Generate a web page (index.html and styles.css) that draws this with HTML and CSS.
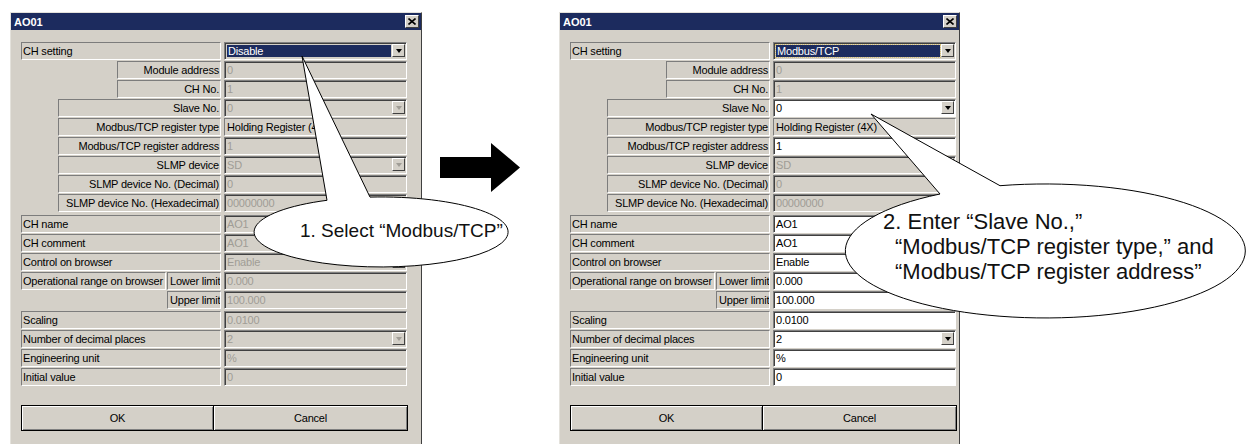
FILE: index.html
```html
<!DOCTYPE html>
<html lang="en">
<head>
  <meta charset="UTF-8" />
  <title>AO01 - CH setting</title>
  <link rel="stylesheet" href="styles.css">
</head>
<body>
  <div class="page">

    <!-- before: CH setting = Disable -->
    <div class="dlg dlg-first">
      <div class="titlebar">
        <span>AO01</span>
        <span class="close"><svg width="8" height="7" viewBox="0 0 8 7"><path d="M0.5 0.5 L7.5 6.5 M7.5 0.5 L0.5 6.5" stroke="#000" stroke-width="1.6"/></svg></span>
      </div>
      <div class="dlg-body">
        <div class="row"><div class="lbl">CH setting</div><div class="val hl"><span class="txt">Disable</span><span class="drop"></span></div></div>
        <div class="row"><div class="lbl r sub2">Module address</div><div class="val off"><span class="txt">0</span></div></div>
        <div class="row"><div class="lbl r sub2">CH No.</div><div class="val off"><span class="txt">1</span></div></div>
        <div class="row"><div class="lbl r sub1">Slave No.</div><div class="val off"><span class="txt">0</span><span class="drop dim"></span></div></div>
        <div class="row"><div class="lbl r sub1">Modbus/TCP register type</div><div class="val stat"><span class="txt">Holding Register (4X)</span></div></div>
        <div class="row"><div class="lbl r sub1">Modbus/TCP register address</div><div class="val off"><span class="txt">1</span></div></div>
        <div class="row"><div class="lbl r sub1">SLMP device</div><div class="val off"><span class="txt">SD</span><span class="drop dim"></span></div></div>
        <div class="row"><div class="lbl r sub1">SLMP device No. (Decimal)</div><div class="val off"><span class="txt">0</span></div></div>
        <div class="row"><div class="lbl r sub1">SLMP device No. (Hexadecimal)</div><div class="val off"><span class="txt">00000000</span></div></div>

        <div class="row gap"><div class="lbl">CH name</div><div class="val off"><span class="txt">AO1</span></div></div>
        <div class="row"><div class="lbl">CH comment</div><div class="val off"><span class="txt">AO1</span></div></div>
        <div class="row"><div class="lbl">Control on browser</div><div class="val off"><span class="txt">Enable</span><span class="drop dim"></span></div></div>
        <div class="row"><div class="lbl-pair"><div class="lbl">Operational range on browser</div><div class="lbl">Lower limit</div></div><div class="val off"><span class="txt">0.000</span></div></div>
        <div class="row"><div class="lbl upper">Upper limit</div><div class="val off"><span class="txt">100.000</span></div></div>

        <div class="row gap-sm"><div class="lbl">Scaling</div><div class="val off"><span class="txt">0.0100</span></div></div>
        <div class="row"><div class="lbl">Number of decimal places</div><div class="val off"><span class="txt">2</span><span class="drop dim"></span></div></div>
        <div class="row"><div class="lbl">Engineering unit</div><div class="val off"><span class="txt">%</span></div></div>
        <div class="row"><div class="lbl">Initial value</div><div class="val off"><span class="txt">0</span></div></div>

        <div class="btns">
          <div class="btn">OK</div>
          <div class="btn">Cancel</div>
        </div>
      </div>
    </div>

    <svg class="arrow" width="80" height="49" viewBox="0 0 80 49">
      <polygon points="0,14 51,14 51,0 80,24.5 51,49 51,35 0,35" fill="#000"/>
    </svg>

    <!-- after: CH setting = Modbus/TCP -->
    <div class="dlg dlg-second">
      <div class="titlebar">
        <span>AO01</span>
        <span class="close"><svg width="8" height="7" viewBox="0 0 8 7"><path d="M0.5 0.5 L7.5 6.5 M7.5 0.5 L0.5 6.5" stroke="#000" stroke-width="1.6"/></svg></span>
      </div>
      <div class="dlg-body">
        <div class="row"><div class="lbl">CH setting</div><div class="val hl focus"><span class="txt">Modbus/TCP</span><span class="drop"></span></div></div>
        <div class="row"><div class="lbl r sub2">Module address</div><div class="val off"><span class="txt">0</span></div></div>
        <div class="row"><div class="lbl r sub2">CH No.</div><div class="val off"><span class="txt">1</span></div></div>
        <div class="row"><div class="lbl r sub1">Slave No.</div><div class="val on"><span class="txt">0</span><span class="drop"></span></div></div>
        <div class="row"><div class="lbl r sub1">Modbus/TCP register type</div><div class="val stat"><span class="txt">Holding Register (4X)</span></div></div>
        <div class="row"><div class="lbl r sub1">Modbus/TCP register address</div><div class="val on"><span class="txt">1</span></div></div>
        <div class="row"><div class="lbl r sub1">SLMP device</div><div class="val off"><span class="txt">SD</span><span class="drop dim"></span></div></div>
        <div class="row"><div class="lbl r sub1">SLMP device No. (Decimal)</div><div class="val off"><span class="txt">0</span></div></div>
        <div class="row"><div class="lbl r sub1">SLMP device No. (Hexadecimal)</div><div class="val off"><span class="txt">00000000</span></div></div>

        <div class="row gap"><div class="lbl">CH name</div><div class="val on"><span class="txt">AO1</span></div></div>
        <div class="row"><div class="lbl">CH comment</div><div class="val on"><span class="txt">AO1</span></div></div>
        <div class="row"><div class="lbl">Control on browser</div><div class="val on"><span class="txt">Enable</span><span class="drop"></span></div></div>
        <div class="row"><div class="lbl-pair"><div class="lbl">Operational range on browser</div><div class="lbl">Lower limit</div></div><div class="val on"><span class="txt">0.000</span></div></div>
        <div class="row"><div class="lbl upper">Upper limit</div><div class="val on"><span class="txt">100.000</span></div></div>

        <div class="row gap-sm"><div class="lbl">Scaling</div><div class="val on"><span class="txt">0.0100</span></div></div>
        <div class="row"><div class="lbl">Number of decimal places</div><div class="val on"><span class="txt">2</span><span class="drop"></span></div></div>
        <div class="row"><div class="lbl">Engineering unit</div><div class="val on"><span class="txt">%</span></div></div>
        <div class="row"><div class="lbl">Initial value</div><div class="val on"><span class="txt">0</span></div></div>

        <div class="btns">
          <div class="btn">OK</div>
          <div class="btn">Cancel</div>
        </div>
      </div>
    </div>
  </div>

  <!-- speech bubbles drawn over the dialogs -->
  <svg class="callouts" width="1249" height="444" viewBox="0 0 1249 444">
    <path d="M370 197.1 A127 35 0 1 1 327 200.3 L302 56 Z" fill="#fff" stroke="#000" stroke-width="1"/>
    <path d="M1000 185.7 A200 67 0 1 1 940 194 L871 114 Z" fill="#fff" stroke="#000" stroke-width="1"/>
  </svg>
  <div class="note note-one">1. Select “Modbus/TCP”</div>
  <div class="note note-two">
    <span>2. Enter “Slave No.,”</span>
    <span class="ind">“Modbus/TCP register type,” and</span>
    <span class="ind">“Modbus/TCP register address”</span>
  </div>
</body>
</html>
```

FILE: styles.css
```css
body {
  margin: 0;
  width: 1249px;
  height: 444px;
  overflow: hidden;
  position: relative;
  background-color: #fff;
  font-family: "Liberation Sans", Arial, sans-serif;
}
.page {
  display: flex;
  align-items: flex-start;
  padding: 12px 0 0 10px;
}

/* dialog window */
.dlg {
  flex: none;
  box-sizing: border-box;
  height: 440px;
  overflow: hidden;
  background-color: #d4d0c8;
  border: 1px solid #404040;
  border-top-color: #e4e2dc;
  border-left-color: #e4e2dc;
  font-size: 11px;
  letter-spacing: -0.2px;
  color: #000;
}
.dlg-first {
  width: 412px;
}
.dlg-second {
  width: 401px;
}
.titlebar {
  height: 17px;
  background-color: #1c2b5e;
  color: #fff;
  font-weight: bold;
  letter-spacing: 0;
  display: flex;
  justify-content: space-between;
  align-items: center;
  padding: 0 2px 0 3px;
}
.close {
  box-sizing: border-box;
  width: 14px;
  height: 13px;
  background-color: #d4d0c8;
  border: 1px solid;
  border-color: #fff #404040 #404040 #fff;
  display: flex;
  align-items: center;
  justify-content: center;
}
.dlg-body {
  padding: 12px 0 0 10px;
}

/* setting rows */
.row {
  display: grid;
  grid-template-columns: 200px 183px;
  column-gap: 3px;
  height: 18px;
  margin-bottom: 1px;
}
.row.gap {
  margin-top: 3px;
}
.row.gap-sm {
  margin-top: 2px;
}
.lbl {
  box-sizing: border-box;
  height: 18px;
  border: 1px solid;
  border-color: #7c7c7c #fff #fff #7c7c7c;
  line-height: 16px;
  padding: 0 1px;
  white-space: nowrap;
  overflow: hidden;
}
.lbl.r {
  text-align: right;
}
.lbl.sub1 {
  margin-left: 37px;
}
.lbl.sub2 {
  margin-left: 96px;
}
.lbl.upper {
  margin-left: 146px;
  padding-left: 2px;
}
.lbl-pair {
  display: grid;
  grid-template-columns: 145px 54px;
  column-gap: 1px;
}
.lbl-pair .lbl + .lbl {
  padding-left: 2px;
}

/* value fields */
.val {
  box-sizing: border-box;
  height: 18px;
  display: flex;
  border: 1px solid;
  border-color: #808080 #fff #fff #808080;
  box-shadow: inset 1px 1px #404040;
  white-space: nowrap;
  overflow: hidden;
}
.val .txt {
  flex: 1;
  line-height: 16px;
  padding-left: 2px;
}
.val.on {
  background-color: #fff;
}
.val.off {
  color: #a09d96;
}
.val.stat {
  border-color: #7c7c7c #fff #fff #7c7c7c;
  box-shadow: none;
}
.val.hl .txt {
  margin: 2px 1px 2px 2px;
  padding-left: 1px;
  line-height: 12px;
  background-color: #1c2b5e;
  color: #fff;
}
.val.focus .txt {
  outline: 1px dotted #d8c070;
}
.drop {
  flex: none;
  box-sizing: border-box;
  width: 13px;
  height: 13px;
  margin: 1px 1px 0 0;
  background-color: #d4d0c8;
  border: 1px solid;
  border-color: #fff #404040 #404040 #fff;
  display: flex;
  align-items: center;
  justify-content: center;
}
.drop::after {
  content: "";
  border-left: 3px solid transparent;
  border-right: 3px solid transparent;
  border-top: 4px solid #000;
}
.drop.dim::after {
  border-top-color: #a09d96;
}

/* OK / Cancel */
.btns {
  display: grid;
  grid-template-columns: 193px 194px;
  height: 26px;
  margin-top: 19px;
}
.btn {
  background-color: #d4d0c8;
  border: 1px solid #000;
  box-shadow: inset 1px 1px #fff, inset -1px -1px #808080;
  display: flex;
  align-items: center;
  justify-content: center;
}
.btn + .btn {
  margin-left: -1px;
}

.arrow {
  flex: none;
  margin: 131px 39px 0 18px;
}

/* callouts */
.callouts {
  position: absolute;
  top: 0;
  left: 0;
  pointer-events: none;
}
.note {
  position: absolute;
  color: #111;
  white-space: nowrap;
  font-size: 19px;
  line-height: 22px;
}
.note-one {
  left: 300px;
  top: 220px;
}
.note-two {
  left: 883px;
  top: 209px;
  font-size: 22px;
  line-height: 25px;
}
.note-two span {
  display: block;
}
.note-two .ind {
  padding-left: 12px;
}
```
